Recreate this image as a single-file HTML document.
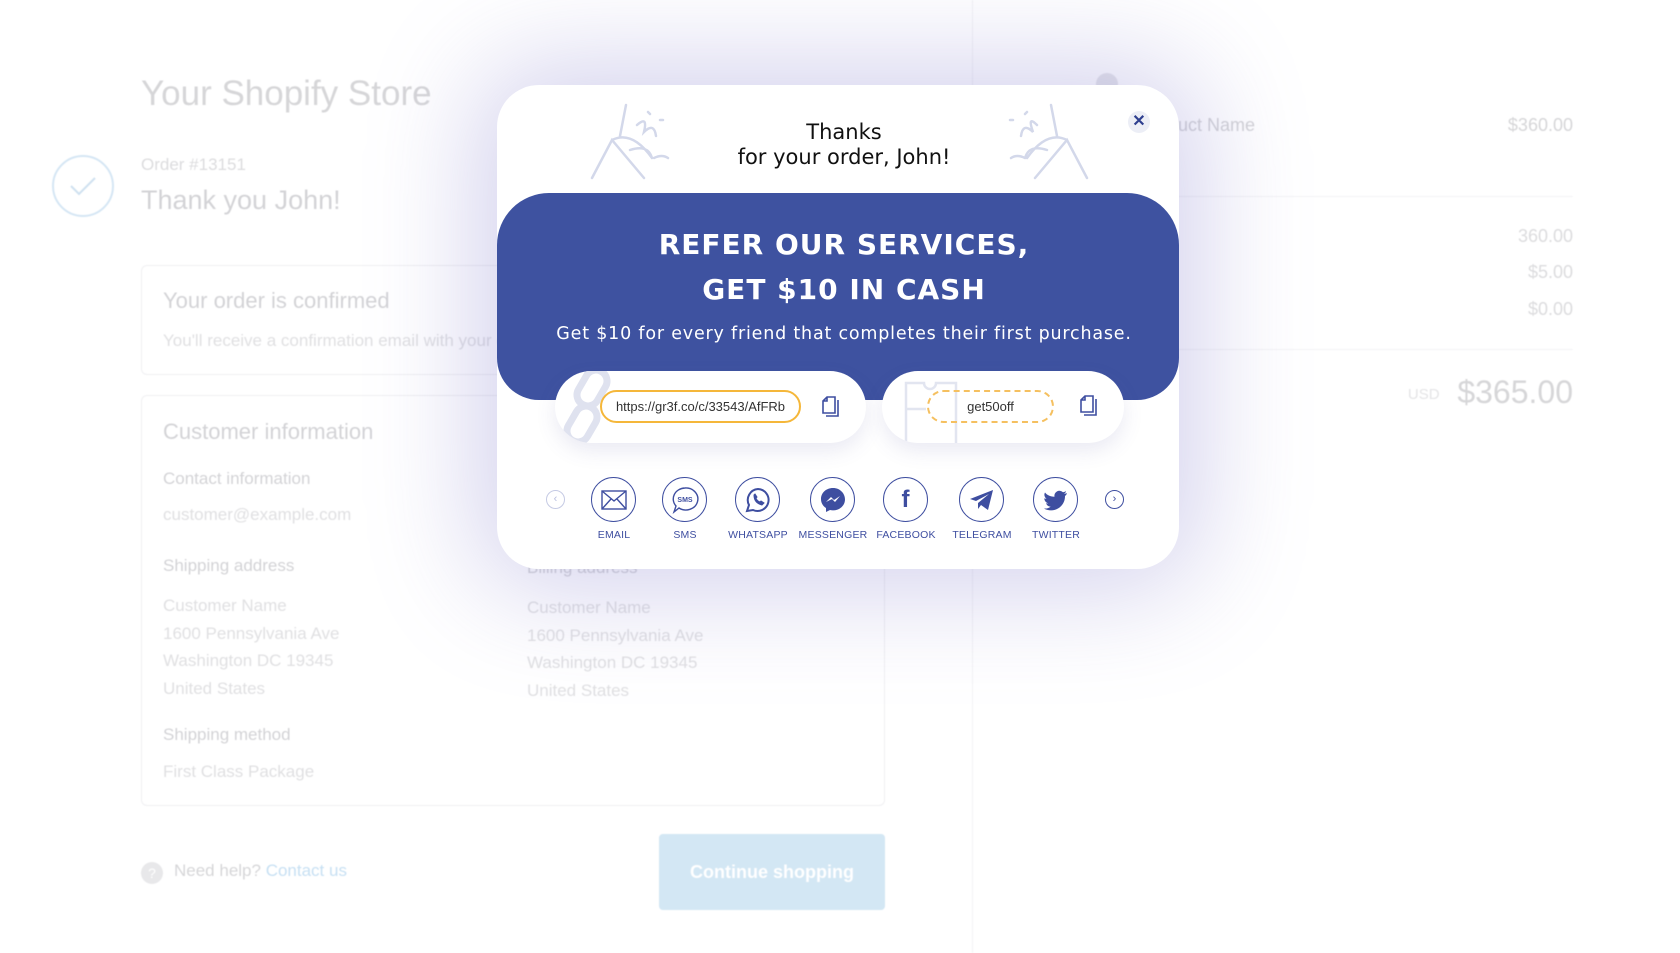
<!DOCTYPE html>
<html><head><meta charset="utf-8"><style>
*{margin:0;padding:0;box-sizing:border-box}
body{width:1680px;height:953px;overflow:hidden;background:#fff;font-family:"Liberation Sans",sans-serif;position:relative;color:#d3d3d6}
.a{position:absolute;white-space:nowrap}
.box{position:absolute;border:1px solid #f0f0f2;border-radius:6px}
.bg{filter:blur(0.5px)}
.modal{position:absolute;left:497px;top:85px;width:682px;height:484px;background:#fff;border-radius:42px;box-shadow:0 0 110px 20px rgba(120,115,200,.33)}
.band{position:absolute;left:0;top:108px;width:682px;height:207px;background:#3e52a0;border-radius:52px 52px 42px 42px}
.ic{position:absolute;width:45px;height:45px;border:1.5px solid #3e4ea0;border-radius:50%;top:456px;display:flex;align-items:center;justify-content:center}
.lb{position:absolute;top:444px;font-size:10.5px;color:#3e4ea0;width:90px;text-align:center;letter-spacing:.2px}
</style></head><body>
<div class="bg">
<div style="position:absolute;left:972px;top:0;width:1px;height:953px;background:#f4f4f6"></div>
<div class="a" style="left:141px;top:74px;font-size:35px;color:#d6d6d8">Your Shopify Store</div>
<div class="a" style="left:52px;top:155px;width:62px;height:62px;border:2px solid #d5e6f4;border-radius:50%"></div>
<svg class="a" style="left:68px;top:175px" width="30" height="22"><path d="M3 11 L11 19 L27 3" stroke="#cfe1f0" stroke-width="2" fill="none"/></svg>
<div class="a" style="left:141px;top:155px;font-size:17px;color:#dcdcde">Order #13151</div>
<div class="a" style="left:141px;top:185px;font-size:27px;color:#d3d3d6">Thank you John!</div>
<div class="box" style="left:141px;top:265px;width:744px;height:110px"></div>
<div class="a" style="left:163px;top:288px;font-size:22px;color:#d3d3d6">Your order is confirmed</div>
<div class="a" style="left:163px;top:331px;font-size:17px;color:#e0e0e2">You'll receive a confirmation email with your order number shortly.</div>
<div class="box" style="left:141px;top:395px;width:744px;height:411px"></div>
<div class="a" style="left:163px;top:419px;font-size:22px;color:#d3d3d6">Customer information</div>
<div class="a" style="left:163px;top:469px;font-size:17px;color:#d3d3d6">Contact information</div>
<div class="a" style="left:163px;top:505px;font-size:17px;color:#e0e0e2">customer@example.com</div>
<div class="a" style="left:163px;top:556px;font-size:17px;color:#d3d3d6">Shipping address</div>
<div class="a" style="left:527px;top:558px;font-size:17px;color:#d3d3d6">Billing address</div>
<div class="a" style="left:163px;top:592px;font-size:17px;line-height:27.5px;color:#e0e0e2">Customer Name<br>1600 Pennsylvania Ave<br>Washington DC 19345<br>United States</div>
<div class="a" style="left:527px;top:594px;font-size:17px;line-height:27.5px;color:#e0e0e2">Customer Name<br>1600 Pennsylvania Ave<br>Washington DC 19345<br>United States</div>
<div class="a" style="left:163px;top:725px;font-size:17px;color:#d3d3d6">Shipping method</div>
<div class="a" style="left:163px;top:762px;font-size:17px;color:#e0e0e2">First Class Package</div>
<div class="a" style="left:141px;top:862px;width:22px;height:22px;border-radius:50%;background:#e8e8ea;color:#fff;font-size:14px;text-align:center;line-height:22px">?</div>
<div class="a" style="left:174px;top:861px;font-size:17px;color:#d6d6d8">Need help? <span style="color:#c7e0f3">Contact us</span></div>
<div class="a" style="left:659px;top:834px;width:226px;height:76px;background:#d3e7f4;border-radius:4px;color:#fff;font-size:18px;font-weight:bold;text-align:center;line-height:76px">Continue shopping</div>
<div class="a" style="left:1096px;top:73px;width:22px;height:22px;border-radius:50%;background:#e6e6ea"></div>
<div class="a" style="left:1140px;top:115px;font-size:18px;color:#d3d3d6">Product Name</div>
<div class="a" style="right:107px;top:115px;font-size:18px;color:#d6d6d8">$360.00</div>
<div class="a" style="left:1160px;top:196px;width:413px;height:1px;background:#f4f4f6"></div>
<div class="a" style="right:107px;top:226px;font-size:18px;color:#dcdcde">360.00</div>
<div class="a" style="right:107px;top:262px;font-size:18px;color:#dcdcde">$5.00</div>
<div class="a" style="right:107px;top:299px;font-size:18px;color:#dcdcde">$0.00</div>
<div class="a" style="left:1160px;top:349px;width:413px;height:1px;background:#f4f4f6"></div>
<div class="a" style="right:107px;top:374px;font-size:32px;color:#d6d6d8"><span style="font-size:15px;color:#e4e4e6;vertical-align:middle">USD</span>&nbsp; $365.00</div>
</div>

<div class="modal">
 <svg class="a" style="left:85px;top:15px" width="100" height="80" fill="none" stroke="#d3d8ea" stroke-width="2.5" stroke-linecap="round"><path d="M10 78 L30 40 L62 78 M30 40 Q50 30 70 58 M44 5 L38 36 M55 25 Q66 15 62 32 Q72 22 74 36 M66 12 l2 2 M78 20 l3 0 M48 50 q18 -6 22 8 M72 58 q8 -4 14 0"/></svg>
 <svg class="a" style="left:490px;top:15px" width="110" height="80" fill="none" stroke="#d3d8ea" stroke-width="2.5" stroke-linecap="round"><path d="M100 78 L80 40 L48 78 M80 40 Q60 30 40 58 M64 5 L70 36 M50 25 Q40 15 46 32 Q36 22 34 36 M40 12 l-2 2 M26 20 l-3 0 M60 50 q-18 -6 -22 8 M38 58 q-8 -4 -14 0"/></svg>
 <div class="a" style="left:6px;width:682px;top:35px;text-align:center;font-size:21px;line-height:25px;color:#111;font-family:'DejaVu Sans',sans-serif">Thanks<br>for your order, John!</div>
 <div class="a" style="left:631px;top:26px;width:22px;height:22px;border-radius:50%;background:#eceef6;color:#2e3f8f;font-size:16px;text-align:center;line-height:22px;font-weight:bold">✕</div>
 <div class="band">
  <div class="a" style="left:6px;width:682px;top:29px;text-align:center;color:#fff;font-weight:bold;font-size:28px;line-height:45px;letter-spacing:1px;font-family:'DejaVu Sans',sans-serif">REFER OUR SERVICES,<br>GET $10 IN CASH</div>
  <div class="a" style="left:6px;width:682px;top:131px;text-align:center;color:#fff;font-size:17.5px;letter-spacing:.8px;font-family:'DejaVu Sans',sans-serif">Get $10 for every friend that completes their first purchase.</div>
 </div>
 <div class="a" style="left:58px;top:286px;width:311px;height:72px;background:#fff;border-radius:36px;box-shadow:0 8px 20px rgba(80,80,160,.12);overflow:hidden">
  <svg class="a" style="left:8px;top:0" width="60" height="72" fill="none" stroke="#dfe2ef" stroke-width="7"><rect x="18" y="-2" width="22" height="38" rx="11" transform="rotate(30 29 17)"/><rect x="8" y="34" width="22" height="38" rx="11" transform="rotate(30 19 53)"/></svg>
  <div class="a" style="left:45px;top:19px;width:201px;height:33px;border:2px solid #f5b73a;border-radius:17px;font-size:13px;color:#333;text-align:center;line-height:29px;background:#fff">https://gr3f.co/c/33543/AfFRb</div>
  <svg class="a" style="left:266px;top:24px" width="22" height="24" fill="none" stroke="#3e4ea0" stroke-width="1.6"><path d="M2 6 L6 2 H14 V18 H2 Z M6 2 V6 H2 M17 5 V21 H5"/></svg>
 </div>
 <div class="a" style="left:385px;top:286px;width:242px;height:72px;background:#fff;border-radius:36px;box-shadow:0 8px 20px rgba(80,80,160,.12);overflow:hidden">
  <svg class="a" style="left:20px;top:8px" width="60" height="64" fill="none" stroke="#e2e5f0" stroke-width="2.5"><path d="M4 70 V4 H22 a6 6 0 0 0 12 0 H54 V70 M24 30 H4"/></svg>
  <div class="a" style="left:45px;top:19px;width:127px;height:33px;border:2px dashed #f5c060;border-radius:17px;font-size:13px;color:#333;text-align:center;line-height:29px">get50off</div>
  <svg class="a" style="left:197px;top:23px" width="22" height="24" fill="none" stroke="#3e4ea0" stroke-width="1.6"><path d="M2 6 L6 2 H14 V18 H2 Z M6 2 V6 H2 M17 5 V21 H5"/></svg>
 </div>
 <div class="a" style="left:49px;top:405px;width:19px;height:19px;border:1.5px solid #c5cae4;border-radius:50%;color:#b8bedf;font-size:11px;text-align:center;line-height:16px">‹</div>
 <div class="a" style="left:608px;top:405px;width:19px;height:19px;border:1.5px solid #3e4ea0;border-radius:50%;color:#3e4ea0;font-size:11px;text-align:center;line-height:16px">›</div>
 <div class="ic" style="left:94px;top:392px"><svg width="26" height="20" fill="none" stroke="#3e4ea0" stroke-width="1.4"><rect x="1" y="1" width="24" height="18"/><path d="M1 1 L13 11 L25 1 M1 19 L10 9 M25 19 L16 9"/></svg></div>
 <div class="ic" style="left:165px;top:392px"><svg width="28" height="28" fill="none" stroke="#3e4ea0" stroke-width="1.4"><path d="M14 2 a12 11 0 1 1 -6 20 L3 26 L5 20 A12 11 0 0 1 14 2Z"/><text x="14" y="16" font-size="7" fill="#3e4ea0" stroke="none" text-anchor="middle" font-family="Liberation Sans" font-weight="bold">SMS</text></svg></div>
 <div class="ic" style="left:238px;top:392px"><svg width="26" height="26" fill="none" stroke="#3e4ea0" stroke-width="2"><path d="M13 2 a11 11 0 1 1 -5 21 L2 24 L4 18 A11 11 0 0 1 13 2Z"/><path d="M9 8 q0 8 8 10 l2 -2 -3 -2 -1 1 q-3 -1 -4 -4 l1 -1 -2 -3z" fill="#3e4ea0" stroke-width="1"/></svg></div>
 <div class="ic" style="left:313px;top:392px"><svg width="26" height="26"><path d="M13 1 C6 1 1 6 1 12 c0 4 2 7 5 9 v4 l4 -2 c1 .3 2 .4 3 .4 c7 0 12 -5 12 -11 S20 1 13 1Z" fill="#3e4ea0"/><path d="M6 15 L11 10 L14 13 L20 9 L15 15 L12 12Z" fill="#fff"/></svg></div>
 <div class="ic" style="left:386px;top:392px"><span style="font:bold 24px 'Liberation Sans';color:#3e4ea0">f</span></div>
 <div class="ic" style="left:462px;top:392px"><svg width="26" height="24"><path d="M1 11 L24 2 L19 22 L12 17 L9 21 L9 15 L20 6 L7 13Z" fill="#3e4ea0"/></svg></div>
 <div class="ic" style="left:536px;top:392px"><svg width="24" height="22"><path d="M23 4 c-1 .5 -2 .7 -3 .8 c1 -.6 2 -1.6 2 -2.7 c-1 .6 -2 1 -3 1.2 a5 5 0 0 0 -8.5 4.5 C6 7.6 3 6 1 3.5 c-1.4 2.4 -.3 5 1.5 6.3 c-.8 0 -1.6 -.3 -2.2 -.6 c0 2.5 1.7 4.5 4 5 c-.7 .2 -1.5 .2 -2.2 .1 c.6 2 2.5 3.4 4.6 3.4 A10 10 0 0 1 0 19.5 A14 14 0 0 0 21 7 c1 -.7 1.7 -1.7 2 -3Z" fill="#3e4ea0"/></svg></div>
 <div class="lb" style="left:72px">EMAIL</div>
 <div class="lb" style="left:143px">SMS</div>
 <div class="lb" style="left:216px">WHATSAPP</div>
 <div class="lb" style="left:291px">MESSENGER</div>
 <div class="lb" style="left:364px">FACEBOOK</div>
 <div class="lb" style="left:440px">TELEGRAM</div>
 <div class="lb" style="left:514px">TWITTER</div>
</div>
</body></html>
